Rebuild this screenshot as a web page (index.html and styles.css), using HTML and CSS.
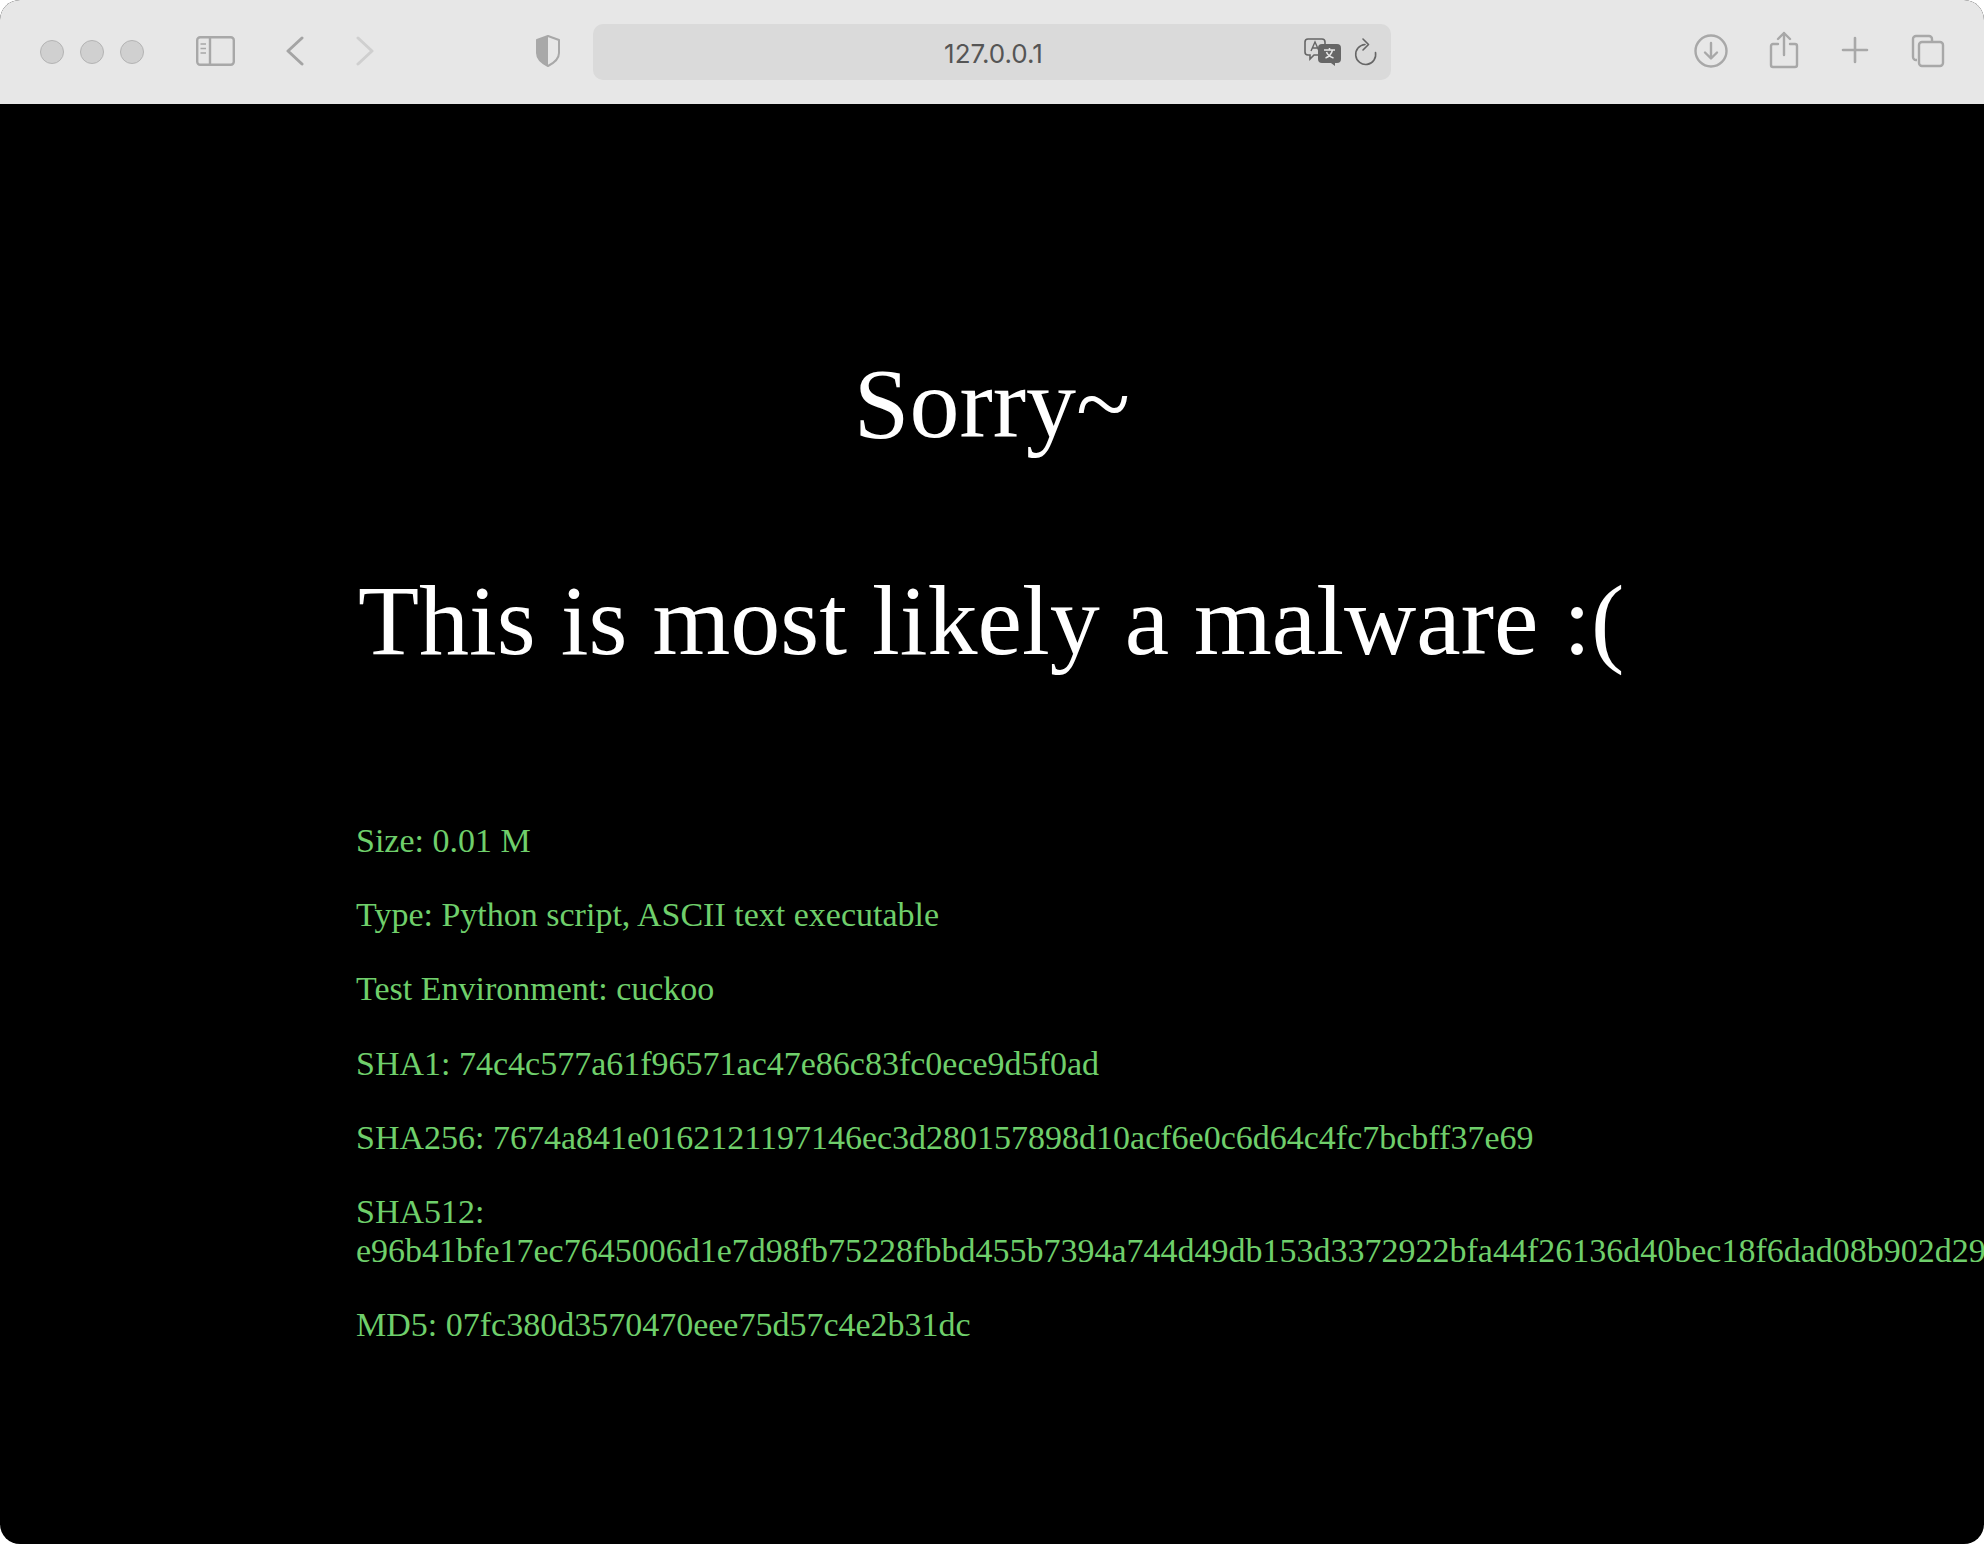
FILE: index.html
```html
<!DOCTYPE html>
<html lang="en">
<head>
    <meta charset="UTF-8">
    <meta name="viewport" content="width=device-width, initial-scale=1.0">
    <title>127.0.0.1</title>
    <link rel="stylesheet" href="styles.css">
</head>
<body>

<div class="window">
    <div class="toolbar">
        <div class="lights">
            <span class="light"></span>
            <span class="light"></span>
            <span class="light"></span>
        </div>
        <svg class="icon icon-sidebar" width="39" height="30" viewBox="0 0 39 30" fill="none" stroke="#a8a8a8" stroke-width="2.4">
            <rect x="1.2" y="1.2" width="36.6" height="27.600" rx="3"/>
            <path d="M14 1v28"/>
            <path d="M4.500 8h5.500M4.500 12.500h5.500M4.500 17h5.500" stroke-width="1.600"/>
        </svg>
        <svg class="icon icon-back" width="20" height="30" viewBox="0 0 20 30" fill="none" stroke="#a4a4a4" stroke-width="3" stroke-linecap="round" stroke-linejoin="round">
            <path d="M17 2L3 15l14 13"/>
        </svg>
        <svg class="icon icon-forward" width="20" height="30" viewBox="0 0 20 30" fill="none" stroke="#cfcfcf" stroke-width="3" stroke-linecap="round" stroke-linejoin="round">
            <path d="M3 2l14 13L3 28"/>
        </svg>
        <svg class="icon icon-shield" width="26" height="34" viewBox="0 0 26 34" fill="none">
            <path d="M13 2l11 4v13c0 6-5 10-11 13C7 29 2 25 2 19V6z" stroke="#a8a8a8" stroke-width="2" stroke-linejoin="round"/>
            <path d="M13 2L2 6v13c0 6 5 10 11 13z" fill="#a8a8a8"/>
        </svg>
        <div class="address">
            <span class="address-text">127.0.0.1</span>
            <svg class="icon-translate" width="38" height="28" viewBox="0 0 38 28" fill="none">
                <path d="M4 1h14a3 3 0 0 1 3 3v10a3 3 0 0 1-3 3H10l-4 4v-4H4a3 3 0 0 1-3-3V4a3 3 0 0 1 3-3z" stroke="#666" stroke-width="1.600"/>
                <path d="M7 13l4-9 4 9M8.500 10h5" stroke="#666" stroke-width="1.400"/>
                <path d="M18 6h15a4 4 0 0 1 4 4v11a4 4 0 0 1-4 4h-2v3l-4-3h-9a4 4 0 0 1-4-4V10a4 4 0 0 1 4-4z" fill="#666"/>
                <path d="M20 12h11M25.500 10v2M28.500 12c-1 4-4 7-7 8M22.500 14c1 3 4 5 7 6" stroke="#e6e6e6" stroke-width="1.500"/>
            </svg>
            <svg class="icon-reload" width="24" height="28" viewBox="0 0 24 28" fill="none" stroke="#666" stroke-width="1.600" stroke-linecap="round" stroke-linejoin="round">
                <path d="M11 6.500A10 10 0 1 0 21.500 14.500"/>
                <path d="M9 1l5.500 5.500L9 12"/>
            </svg>
        </div>
        <svg class="icon icon-download" width="34" height="34" viewBox="0 0 34 34" fill="none" stroke="#a8a8a8" stroke-width="2.400" stroke-linecap="round" stroke-linejoin="round">
            <circle cx="17" cy="17" r="15.500"/>
            <path d="M17 9v15M11 18.500l6 6 6-6"/>
        </svg>
        <svg class="icon icon-share" width="30" height="38" viewBox="0 0 30 38" fill="none" stroke="#a8a8a8" stroke-width="2.400" stroke-linecap="round" stroke-linejoin="round">
            <path d="M9 13H4a2 2 0 0 0-2 2v19a2 2 0 0 0 2 2h22a2 2 0 0 0 2-2V15a2 2 0 0 0-2-2h-5"/>
            <path d="M15 24V2M9 8l6-6 6 6"/>
        </svg>
        <svg class="icon icon-plus" width="28" height="28" viewBox="0 0 28 28" fill="none" stroke="#a8a8a8" stroke-width="2.600" stroke-linecap="round">
            <path d="M14 2v24M2 14h24"/>
        </svg>
        <svg class="icon icon-tabs" width="34" height="34" viewBox="0 0 34 34" fill="none" stroke="#a8a8a8" stroke-width="2.400" stroke-linejoin="round">
            <path d="M6 26H5a3 3 0 0 1-3-3V5a3 3 0 0 1 3-3h13a3 3 0 0 1 3 3v3"/>
            <rect x="8" y="8" width="24" height="24" rx="3"/>
        </svg>
    </div>

    <div class="content">
        <h1 class="title title-center">Sorry~</h1>
        <h1 class="title title-shift">This is most likely a malware :(</h1>
        <div class="details">
            <p>Size: 0.01 M</p>
            <p>Type: Python script, ASCII text executable</p>
            <p>Test Environment: cuckoo</p>
            <p>SHA1: 74c4c577a61f96571ac47e86c83fc0ece9d5f0ad</p>
            <p>SHA256: 7674a841e0162121197146ec3d280157898d10acf6e0c6d64c4fc7bcbff37e69</p>
            <p>SHA512: e96b41bfe17ec7645006d1e7d98fb75228fbbd455b7394a744d49db153d3372922bfa44f26136d40bec18f6dad08b902d29</p>
            <p>MD5: 07fc380d3570470eee75d57c4e2b31dc</p>
        </div>
    </div>
</div>

</body>
</html>
```

FILE: styles.css
```css
html, body {
    margin: 0;
    height: 100%;
    background-color: #fff;
}
.window {
    width: 1984px;
    height: 1544px;
    display: flex;
    flex-direction: column;
    overflow: hidden;
    border-radius: 20px;
    background-color: #000;
}
.toolbar {
    height: 104px;
    flex-shrink: 0;
    display: flex;
    align-items: center;
    box-sizing: border-box;
    padding-left: 40px;
    background-color: #e7e7e7;
}
.lights {
    display: flex;
    gap: 16px;
    margin-right: 52px;
    margin-bottom: 1px;
}
.light {
    width: 24px;
    height: 24px;
    box-sizing: border-box;
    border-radius: 50%;
    background-color: #d0d0d0;
    border: 1px solid #b4b4b4;
}
.icon {
    flex-shrink: 0;
    margin-bottom: 2px;
}
.icon-sidebar {
    margin-right: 50px;
}
.icon-back {
    margin-right: 50px;
}
.icon-forward {
    margin-right: 160px;
}
.icon-shield {
    margin-right: 32px;
}
.address {
    width: 798px;
    height: 56px;
    flex-shrink: 0;
    display: flex;
    align-items: center;
    box-sizing: border-box;
    padding-right: 13px;
    margin-right: 303px;
    border-radius: 10px;
    background-color: #dadada;
}
.address-text {
    flex: 1;
    padding: 2px 0 0 90px;
    text-align: center;
    font-family: "Inter", "Liberation Sans", sans-serif;
    font-size: 26px;
    color: #555;
}
.icon-translate {
    margin-right: 12px;
}
.icon-download {
    margin-right: 41px;
}
.icon-share {
    margin-right: 42px;
    margin-bottom: 5px;
}
.icon-plus {
    margin-right: 42px;
    margin-bottom: 4px;
}
.content {
    flex: 1;
    padding: 242px 0 0 356px;
    font-family: "Liberation Serif", "Times New Roman", serif;
}
.title {
    margin: 0 0 102px;
    width: 1272px;
    font-size: 100px;
    font-weight: 400;
    line-height: 115px;
    color: #fff;
}
.title-center {
    text-align: center;
}
.title-shift {
    padding-left: 2px;
}
.details {
    margin-top: 143px;
    font-size: 34px;
    line-height: 39px;
    color: #6fcf6b;
}
.details p {
    margin: 0 0 35.200px;
    width: 1272px;
}
```
